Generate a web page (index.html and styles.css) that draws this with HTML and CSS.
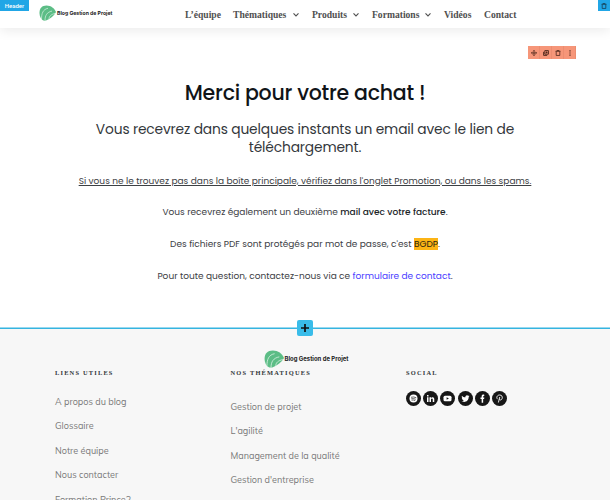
FILE: index.html
```html
<!DOCTYPE html>
<html lang="fr">
<head>
    <meta charset="UTF-8">
    <meta name="viewport" content="width=device-width, initial-scale=1.0">
    <title>Merci - Blog Gestion de Projet</title>
    <link rel="stylesheet" href="styles.css">
</head>
<body>
    <svg class="sprite" width="0" height="0">
        <symbol id="leaf" viewBox="0 0 34 34" preserveAspectRatio="none">
            <path fill="#5cbd86" d="M1 16C1 7 6 1 15 1c9 0 16 6 19 14-4 8-11 14-20 18C5 35 1 25 1 16z"/>
            <path fill="none" stroke="#e9f7ef" stroke-width="1.3" d="M5 30C5 18 8 9 18 7M12 33c0-11 4-18 14-20M20 30c0-6 4-10 12-12"/>
        </symbol>
        <symbol id="trash" viewBox="0 0 10 10">
            <path fill="none" stroke="currentColor" stroke-width="1.3" d="M.8 2.2h8.4M3.2 2V.9h3.6V2M2 2.5v6.6h6V2.5"/>
        </symbol>
        <symbol id="chevron" viewBox="0 0 8 6">
            <path fill="none" stroke="currentColor" stroke-width="1.1" d="M1.5 1.3 4 3.9l2.5-2.6"/>
        </symbol>
    </svg>

    <header class="header">
        <span class="header-tag">Header</span>
        <span class="header-tool"><svg width="6" height="6"><use href="#trash"/></svg></span>
        <a class="logo" href="#"><svg width="17" height="16"><use href="#leaf"/></svg><span>Blog Gestion de Projet</span></a>
        <nav class="nav">
            <a class="n1" href="#">L’équipe</a>
            <a class="n2" href="#">Thématiques <svg width="8" height="6"><use href="#chevron"/></svg></a>
            <a class="n3" href="#">Produits <svg width="8" height="6"><use href="#chevron"/></svg></a>
            <a class="n4" href="#">Formations <svg width="8" height="6"><use href="#chevron"/></svg></a>
            <a class="n5" href="#">Vidéos</a>
            <a class="n6" href="#">Contact</a>
        </nav>
    </header>

    <main class="content">
        <div class="toolbar">
            <span><svg width="6" height="6" viewBox="0 0 10 10"><path fill="none" stroke="currentColor" stroke-width="1.3" d="M5 .8v8.4M.8 5h8.4M3.5 2.2 5 .7l1.5 1.5M3.5 7.8 5 9.3l1.5-1.5M2.2 3.5.7 5l1.5 1.5M7.8 3.5 9.3 5 7.8 6.5"/></svg></span>
            <span><svg width="6" height="6" viewBox="0 0 10 10"><path fill="none" stroke="currentColor" stroke-width="1.5" d="M3 1h6v6H3zM1 3v6h6M4.5 4h3M6 2.5v3"/></svg></span>
            <span><svg width="6" height="6"><use href="#trash"/></svg></span>
            <span><svg width="6" height="6" viewBox="0 0 10 10"><path fill="currentColor" d="M4 .5h2v2H4zM4 4h2v2H4zM4 7.5h2v2H4z"/></svg></span>
        </div>
        <h1>Merci pour votre achat !</h1>
        <h2>Vous recevrez dans quelques instants un email avec le lien de<br>téléchargement.</h2>
        <p><u>Si vous ne le trouvez pas dans la boîte principale, vérifiez dans l'onglet Promotion, ou dans les spams.</u></p>
        <p>Vous recevrez également un deuxième <strong>mail avec votre facture</strong>.</p>
        <p>Des fichiers PDF sont protégés par mot de passe, c'est <mark>BGDP</mark>.</p>
        <p class="question">Pour toute question, contactez-nous via ce <a href="#">formulaire de contact</a>.</p>
    </main>

    <footer class="footer">
        <button class="add" aria-label="Ajouter"><svg width="8" height="8" viewBox="0 0 8 8"><path stroke="#111" stroke-width="1.7" d="M4 0v8M0 4h8"/></svg></button>
        <a class="logo footer-logo" href="#"><svg width="20" height="18"><use href="#leaf"/></svg><span>Blog Gestion de Projet</span></a>
        <div class="columns">
            <div class="column">
                <h3>Liens utiles</h3>
                <ul>
                    <li>A propos du blog</li>
                    <li>Glossaire</li>
                    <li>Notre équipe</li>
                    <li>Nous contacter</li>
                    <li>Formation Prince2</li>
                </ul>
            </div>
            <div class="column themes">
                <h3>Nos thématiques</h3>
                <ul>
                    <li>Gestion de projet</li>
                    <li>L'agilité</li>
                    <li>Management de la qualité</li>
                    <li>Gestion d'entreprise</li>
                </ul>
            </div>
            <div class="column">
                <h3>Social</h3>
                <div class="social">
                    <svg viewBox="0 0 30 30"><circle cx="15" cy="15" r="15"/><circle class="w" cx="15" cy="15" r="8"/><path class="k" d="M10 12.5q5.5-1.5 10.5 1M10.5 15.5q4.5-1.2 9 1M11 18.3q4-1 7.5 1"/></svg>
                    <svg viewBox="0 0 30 30"><circle cx="15" cy="15" r="15"/><path class="w" d="M8 12.5h3V22H8zM8 8h3v3H8zM13 12.5h3v1.3c1.5-2.5 6.5-2 6.5 2.2v6h-3v-5.3c0-2.5-3.5-2.5-3.5 0V22h-3z"/></svg>
                    <svg viewBox="0 0 30 30"><circle cx="15" cy="15" r="15"/><rect class="w" x="7" y="9.5" width="16" height="11" rx="3"/><path d="m13.3 12.3 4.5 2.7-4.5 2.7z"/></svg>
                    <svg viewBox="0 0 30 30"><circle cx="15" cy="15" r="15"/><path class="w" d="M23 10.2c-.6.3-1.2.5-1.9.5.7-.4 1.2-1 1.4-1.8-.6.4-1.3.7-2.1.8a3.3 3.3 0 0 0-5.6 3c-2.7-.1-5.1-1.4-6.8-3.4-.9 1.5-.4 3.4 1 4.4-.5 0-1-.2-1.5-.4 0 1.6 1.1 2.9 2.6 3.2-.5.1-1 .2-1.5.1.4 1.3 1.6 2.2 3.1 2.3A6.6 6.6 0 0 1 7 20.2c6.5 4.1 14.5 0 14.4-8.3.6-.5 1.2-1 1.6-1.7z"/></svg>
                    <svg viewBox="0 0 30 30"><circle cx="15" cy="15" r="15"/><path class="w" d="M13.3 23.5V16H11v-3h2.3v-2.2c0-2.8 1.8-4 5.2-3.5v2.6c-1.7-.1-2.2.2-2.2 1.3V13h2.3l-.4 3h-1.9v7.5z"/></svg>
                    <svg viewBox="0 0 30 30"><circle cx="15" cy="15" r="15"/><path class="p" d="M11 16.3c-3-3.5-.5-8.3 4.3-8.3 4.5 0 6 3.5 5 6.8-1.1 3.8-4.8 4-5.5 1.7M15.5 12 12.8 23"/></svg>
                </div>
            </div>
        </div>
    </footer>
</body>
</html>
```
FILE: styles.css
```css
* {
    box-sizing: border-box;
}
body {
    margin: 0;
    height: 500px;
    overflow: hidden;
    background: #fff;
    font-family: Poppins, Inter, sans-serif;
    color: #33373b;
}
a {
    color: inherit;
    text-decoration: none;
}
svg {
    display: block;
    flex: none;
}
.sprite {
    position: absolute;
}
.header {
    position: relative;
    display: flex;
    height: 28px;
    padding-left: 39px;
    box-shadow: 0 3px 12px rgba(0, 0, 0, 0.08);
}
.header-tag {
    position: absolute;
    left: 0;
    top: 0;
    width: 29px;
    height: 11px;
    background: #21a6e6;
    color: #fff;
    font: 500 6px/11px Roboto, sans-serif;
    text-align: center;
}
.header-tool {
    position: absolute;
    right: 0;
    top: 0;
    width: 12px;
    height: 11px;
    padding: 3px;
    background: #21a6e6;
    color: #173c50;
}
.logo {
    display: flex;
    align-items: center;
    width: 146px;
    height: 26px;
    font: 700 5.15px Inter, sans-serif;
    color: #222;
    white-space: nowrap;
}
.logo span {
    margin-left: 1px;
}
.nav {
    display: flex;
    height: 29px;
    align-items: center;
    font: 700 9.6px "Liberation Serif", serif;
    color: #505050;
    white-space: nowrap;
}
.nav a {
    display: flex;
    align-items: center;
    justify-content: space-between;
    margin-right: 12px;
}
.n1 { width: 36px; }
.n2 { width: 67px; }
.n3 { width: 48px; }
.n4 { width: 60px; }
.nav .n5 { width: 29px; margin-right: 11px; }
.n6 { width: 32px; }

.content {
    height: 300px;
    padding-top: 18px;
    text-align: center;
    white-space: nowrap;
    font-feature-settings: "cv11";
}
.toolbar {
    display: flex;
    width: 48px;
    height: 13px;
    margin-left: 528px;
    background: #f69679;
    color: #4a2418;
}
.toolbar span {
    display: flex;
    flex: 1;
    align-items: center;
    justify-content: center;
    border-right: 1px solid #ec8d70;
}
h1, h2, h3, p, ul {
    margin: 0;
    padding: 0;
}
h1 {
    height: 61.5px;
    padding-top: 19px;
    font-size: 20.5px;
    letter-spacing: -0.25px;
    line-height: 30px;
    font-weight: 500;
    color: #101418;
}
h2 {
    height: 53px;
    font-size: 13.8px;
    letter-spacing: -0.15px;
    line-height: 18.5px;
    font-weight: 400;
}
p {
    font-size: 9px;
    line-height: 14px;
    height: 31.7px;
    color: #3c4044;
}
.content strong {
    font-weight: 500;
    color: #202428;
}
mark {
    background: #fcb415;
    color: #2c2410;
}
.question a {
    color: #4a40ff;
}

.footer {
    position: relative;
    height: 172px;
    padding: 20px 55px 0;
    border-top: 1px solid #35b4e0;
    background: #f7f7f7;
    box-shadow: 0 -0.5px 0 #35b4e0;
}
.add {
    position: absolute;
    left: 297px;
    top: -9px;
    width: 16px;
    height: 16px;
    padding: 4px;
    border: 0;
    border-radius: 2px;
    background: #39bce9;
}
.footer-logo {
    width: 83px;
    height: 19px;
    margin: 0 auto;
    font-size: 5.95px;
}
.columns {
    display: grid;
    grid-template-columns: 175.5px 175.5px 1fr;
    white-space: nowrap;
}
h3 {
    font: 700 6.4px/10px "Liberation Serif", serif;
    letter-spacing: 1.2px;
    text-transform: uppercase;
    color: #32363a;
}
.column ul {
    padding-top: 11.7px;
    list-style: none;
    font: 9.05px Mulish, Muli, "Open Sans", sans-serif;
    color: #777;
}
.themes ul {
    padding-top: 16.7px;
}
.column li {
    line-height: 24.5px;
}
.social {
    display: flex;
    gap: 2.2px;
    padding-top: 13px;
}
.social svg {
    width: 15px;
    height: 15px;
    fill: #171717;
}
.social .w {
    fill: #fff;
}
.social .k {
    fill: none;
    stroke: #171717;
    stroke-width: 1.3;
}
.social .p {
    fill: none;
    stroke: #fff;
    stroke-width: 1.8;
}
```
